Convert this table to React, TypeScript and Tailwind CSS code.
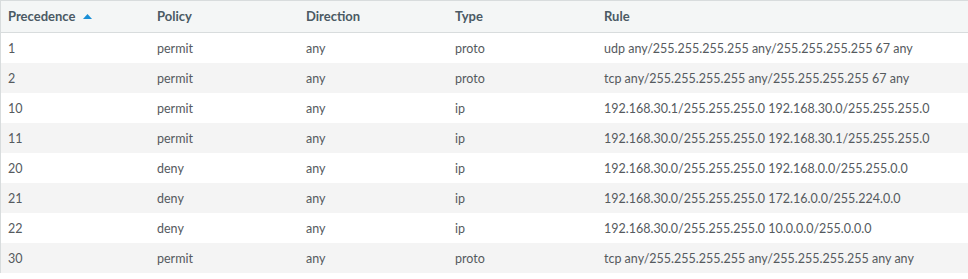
const rows = [
  ["1", "permit", "any", "proto", "udp any/255.255.255.255 any/255.255.255.255 67 any"],
  ["2", "permit", "any", "proto", "tcp any/255.255.255.255 any/255.255.255.255 67 any"],
  ["10", "permit", "any", "ip", "192.168.30.1/255.255.255.0 192.168.30.0/255.255.255.0"],
  ["11", "permit", "any", "ip", "192.168.30.0/255.255.255.0 192.168.30.1/255.255.255.0"],
  ["20", "deny", "any", "ip", "192.168.30.0/255.255.255.0 192.168.0.0/255.255.0.0"],
  ["21", "deny", "any", "ip", "192.168.30.0/255.255.255.0 172.16.0.0/255.224.0.0"],
  ["22", "deny", "any", "ip", "192.168.30.0/255.255.255.0 10.0.0.0/255.0.0.0"],
  ["30", "permit", "any", "proto", "tcp any/255.255.255.255 any/255.255.255.255 any any"],
];

const headers = ["Precedence", "Policy", "Direction", "Type", "Rule"];

export default function App() {
  return (
    <div className="w-[968px] h-[279px] bg-white font-['Lato','Open_Sans',sans-serif]">
      <div className="border-l border-t border-[#d8dcdd]">
        <div className="grid grid-cols-[149px_149px_149px_149px_1fr] h-[32px] items-center bg-[#f4f6f6] border-b border-[#d8dcdd] text-[#4b5a64] font-bold text-[13px]">
          {headers.map((h, i) => (
            <div key={h} className="pl-[7px] pt-[1px] flex items-center gap-[8px]">
              {h}
              {i === 0 && (
                <svg width="9" height="5" viewBox="0 0 9 5" className="mt-[-1px]">
                  <path d="M0 5 L4.5 0 L9 5 Z" fill="#1a8fd6" />
                </svg>
              )}
            </div>
          ))}
        </div>
        {rows.map((r, idx) => (
          <div
            key={r[0]}
            className={`grid grid-cols-[149px_149px_149px_149px_1fr] h-[30px] items-center pt-[3px] text-[12.5px] text-[#555a5e] ${idx % 2 === 1 ? "bg-[#f4f4f4]" : "bg-white"}`}
          >
            {r.map((c, i) => (
              <div key={i} className="pl-[7px] whitespace-nowrap">
                {c}
              </div>
            ))}
          </div>
        ))}
      </div>
    </div>
  );
}
